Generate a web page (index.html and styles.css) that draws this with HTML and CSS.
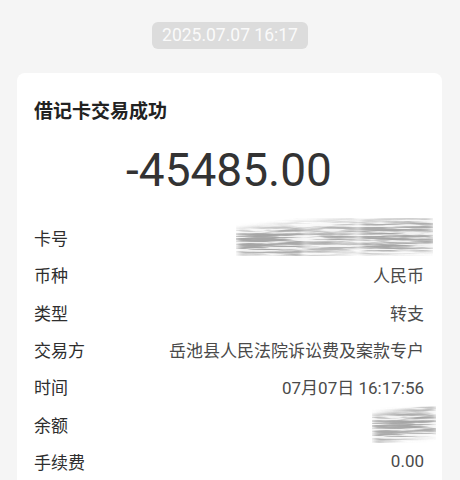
FILE: index.html
```html
<!DOCTYPE html>
<html lang="zh-CN">
  <head>
    <meta charset="UTF-8" />
    <meta name="viewport" content="width=device-width, initial-scale=1.0" />
    <title>交易详情</title>
    <link rel="stylesheet" href="styles.css">
  </head>
  <body>
    <div class="time-wrap">
      <span class="time-tag">2025.07.07 16:17</span>
    </div>

    <div class="card">
      <div class="card-title">借记卡交易成功</div>
      <div class="amount">-45485.00</div>

      <div class="details">
        <div class="row">
          <span class="label">卡号</span>
          <svg class="smudge smudge-card" width="205" height="48" viewBox="0 0 205 48">
            <defs>
              <filter id="pencil" x="0" y="0" width="100%" height="100%">
                <feGaussianBlur in="SourceGraphic" stdDeviation="3" result="soft" />
                <feTurbulence type="fractalNoise" baseFrequency="0.018 0.45" numOctaves="4" seed="11" result="noise" />
                <feColorMatrix in="noise" type="matrix" values="0 0 0 0 0.38  0 0 0 0 0.38  0 0 0 0 0.38  0 0 0 4 -1.5" result="streaks" />
                <feComposite in="streaks" in2="soft" operator="in" result="lines" />
                <feColorMatrix in="soft" type="matrix" values="0 0 0 0 0.72  0 0 0 0 0.72  0 0 0 0 0.72  0 0 0 0.5 0" result="wash" />
                <feMerge>
                  <feMergeNode in="wash" />
                  <feMergeNode in="lines" />
                  <feMergeNode in="lines" />
                </feMerge>
              </filter>
            </defs>
            <g filter="url(#pencil)">
              <polygon points="4,18 72,10 70,42 8,40" fill="#000" opacity="0.8" />
              <polygon points="74,10 124,6 126,38 74,42" fill="#000" opacity="0.55" />
              <polygon points="128,8 200,4 201,36 130,40" fill="#000" opacity="0.75" />
              <ellipse cx="160" cy="26" rx="16" ry="8" fill="#000" />
              <ellipse cx="34" cy="26" rx="24" ry="8" fill="#000" />
              <ellipse cx="100" cy="22" rx="16" ry="6" fill="#000" opacity="0.6" />
            </g>
          </svg>
        </div>
        <div class="row">
          <span class="label">币种</span>
          <span class="value">人民币</span>
        </div>
        <div class="row">
          <span class="label">类型</span>
          <span class="value">转支</span>
        </div>
        <div class="row">
          <span class="label">交易方</span>
          <span class="value">岳池县人民法院诉讼费及案款专户</span>
        </div>
        <div class="row">
          <span class="label">时间</span>
          <span class="value">07月07日 16:17:56</span>
        </div>
        <div class="row">
          <span class="label">余额</span>
          <svg class="smudge smudge-balance" width="70" height="46" viewBox="0 0 70 46">
            <g filter="url(#pencil)">
              <polygon points="4,16 66,5 68,32 8,42" fill="#000" opacity="0.75" />
              <ellipse cx="44" cy="20" rx="14" ry="6" fill="#000" />
            </g>
          </svg>
        </div>
        <div class="row">
          <span class="label">手续费</span>
          <span class="value">0.00</span>
        </div>
      </div>
    </div>
  </body>
</html>
```

FILE: styles.css
```css
body {
  margin: 0;
  padding-top: 22px;
  background: #f5f5f5;
  font-family: Roboto, "Noto Sans CJK SC", sans-serif;
  color: #333;
}
.time-wrap {
  text-align: center;
}
.time-tag {
  display: inline-block;
  height: 27px;
  line-height: 27px;
  padding: 0 10px;
  background: #dcdcdc;
  border-radius: 6px;
  color: #fafafa;
  font-size: 17.5px;
}
.card {
  margin: 24px 18px 0 17px;
  padding: 26px 18px 40px 17px;
  background: #fff;
  border-radius: 8px;
}
.card-title {
  font-size: 19px;
  line-height: 26px;
  font-weight: bold;
  color: #222;
}
.amount {
  margin-top: 17px;
  text-align: center;
  font-size: 46px;
  line-height: 56px;
  color: #333;
}
.details {
  margin-top: 21px;
}
.row {
  display: flex;
  justify-content: space-between;
  align-items: center;
  height: 37.3px;
  font-size: 17px;
}
.label {
  color: #2e2e2e;
}
.value {
  color: #4a4a4a;
}
.smudge {
  flex-shrink: 0;
}
.smudge-card {
  margin-right: -13px;
}
.smudge-balance {
  margin-right: -14px;
}
```
